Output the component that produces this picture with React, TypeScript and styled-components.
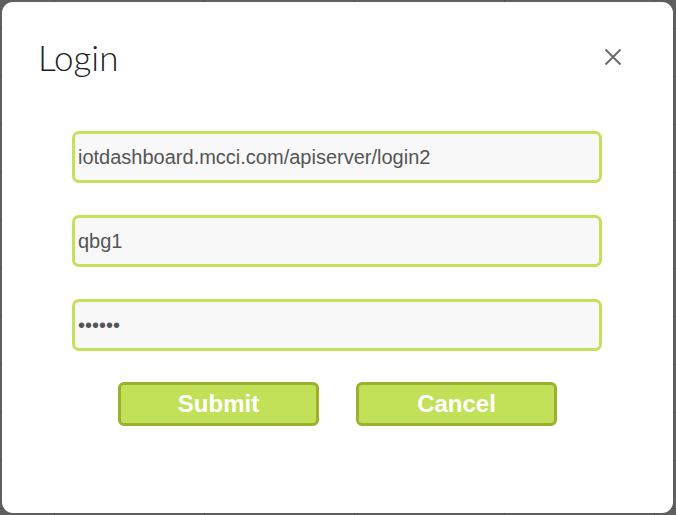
import React from "react";
import styled, { createGlobalStyle } from "styled-components";

const Global = createGlobalStyle`
  html, body { margin: 0; padding: 0; }
  body { width: 676px; height: 515px; overflow: hidden; font-family: "Liberation Sans", Arial, sans-serif; }
  * { box-sizing: border-box; }
`;

const Backdrop = styled.div`
  width: 676px;
  height: 515px;
  padding: 2px 3px 2px 2px;
  background-color: #5f5f5f;
  background-image:
    linear-gradient(to right, rgba(0,0,0,0.12) 1px, transparent 1px),
    linear-gradient(to bottom, rgba(0,0,0,0.12) 1px, transparent 1px);
  background-size: 150px 100%, 100% 48px;
  background-position: 54px 0, 0 28px;
  display: flex;
`;

const Dialog = styled.div`
  flex: 1;
  background: #ffffff;
  border-radius: 11px;
  display: flex;
  flex-direction: column;
`;

const Header = styled.div`
  display: flex;
  align-items: center;
  justify-content: space-between;
  padding: 36px 50px 0 36px;
  height: 74px;
`;

const Title = styled.h2`
  margin: 0;
  font-family: "Lato", "Open Sans", sans-serif;
  font-weight: 300;
  font-size: 35px;
  line-height: 36px;
  color: #202124;
`;

const CloseButton = styled.button`
  border: none;
  background: transparent;
  padding: 0;
  width: 20px;
  height: 20px;
  display: flex;
  align-items: center;
  justify-content: center;
  cursor: pointer;
`;

const Form = styled.form`
  display: flex;
  flex-direction: column;
  gap: 32px;
  margin: 55px 71px 0 70px;
`;

const Field = styled.input`
  width: 100%;
  height: 52px;
  border: 3px solid #c5e05a;
  border-radius: 7px;
  background: #f8f8f8;
  padding: 0 3px;
  font-family: "Liberation Sans", Arial, sans-serif;
  font-size: 20px;
  color: #555555;
  outline: none;
`;

const Actions = styled.div`
  display: flex;
  justify-content: center;
  gap: 37px;
  margin-top: -1px;
  padding-left: 1px;
`;

const ActionButton = styled.button`
  width: 201px;
  height: 44px;
  border: 3px solid #99b12d;
  border-radius: 6px;
  background: #c3e059;
  color: #ffffff;
  font-family: "Liberation Sans", Arial, sans-serif;
  font-weight: 700;
  font-size: 24px;
  line-height: 1;
  cursor: pointer;
  padding: 0;
`;

export default function App() {
  return (
    <>
      <Global />
      <Backdrop>
        <Dialog>
          <Header>
            <Title>Login</Title>
            <CloseButton aria-label="Close">
              <svg width="18" height="18" viewBox="0 0 18 18">
                <path d="M1.5 1.5 L16.5 16.5 M16.5 1.5 L1.5 16.5" stroke="#6b6b6b" strokeWidth="2" fill="none" />
              </svg>
            </CloseButton>
          </Header>
          <Form onSubmit={(e) => e.preventDefault()}>
            <Field type="text" defaultValue="iotdashboard.mcci.com/apiserver/login2" />
            <Field type="text" defaultValue="qbg1" />
            <Field type="password" defaultValue="secret" />
            <Actions>
              <ActionButton type="submit">Submit</ActionButton>
              <ActionButton type="button">Cancel</ActionButton>
            </Actions>
          </Form>
        </Dialog>
      </Backdrop>
    </>
  );
}
